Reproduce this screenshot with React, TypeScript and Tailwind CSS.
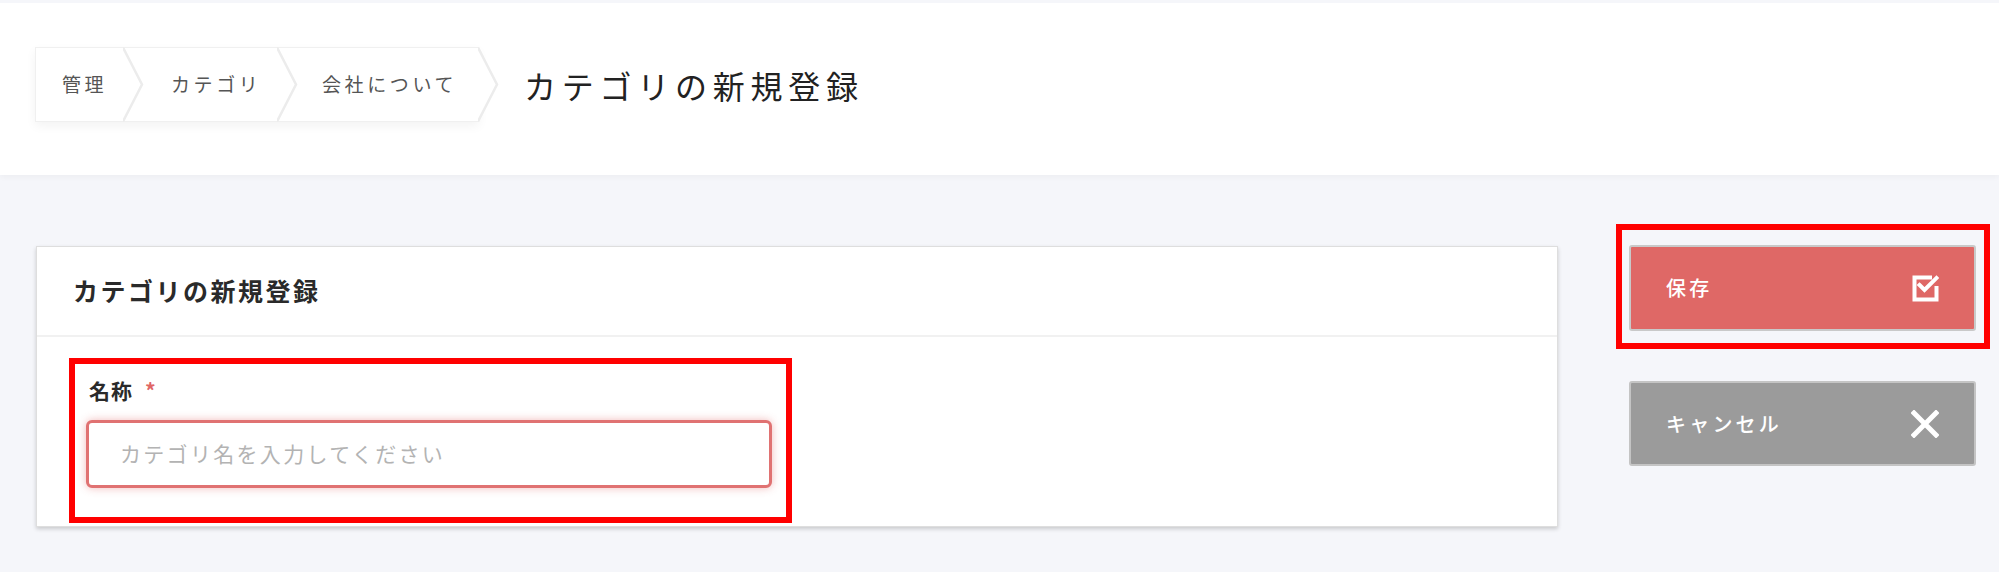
import React from "react";

function Chevron({ last }: { last?: boolean }) {
  return (
    <svg
      className="absolute top-[-1px] left-full z-10"
      width="21"
      height="75"
      viewBox="0 0 21 75"
    >
      {last && <polygon points="0,0 19,37.5 0,75" fill="#ffffff" />}
      <polyline
        points="0,0.5 19,37.5 0,74.5"
        fill="none"
        stroke="#ececec"
        strokeWidth="2.5"
      />
    </svg>
  );
}

function CheckIcon() {
  return (
    <svg width="27" height="27" viewBox="0 0 27 27">
      <path
        d="M18 2.5 H2.5 V24.5 H24.5 V13"
        fill="none"
        stroke="#ffffff"
        strokeWidth="4"
        strokeLinecap="square"
      />
      <path
        d="M7.5 10 L12.5 15 L24.5 3"
        fill="none"
        stroke="#ffffff"
        strokeWidth="4"
        strokeLinecap="square"
      />
    </svg>
  );
}

function XIcon() {
  return (
    <svg width="28" height="28" viewBox="0 0 28 28">
      <path
        d="M3 3 L25 25 M25 3 L3 25"
        fill="none"
        stroke="#ffffff"
        strokeWidth="5"
        strokeLinecap="square"
      />
    </svg>
  );
}

export default function App() {
  return (
    <div className="min-h-[572px] w-[1999px] bg-[#f5f6fa] font-['Noto_Sans_CJK_JP','Noto_Sans',sans-serif] text-[#333]">
      {/* Header */}
      <header className="h-[175px] bg-white border-t-[3px] border-[#f5f6fa] shadow-[0_2px_6px_rgba(0,0,0,0.04)] pt-[44px] pl-[35px]">
        <div className="flex items-center h-[75px]">
          <nav className="flex h-[75px] bg-white border border-[#f0f0f0] shadow-[0_4px_10px_rgba(0,0,0,0.05)]">
            <div className="relative w-[87px] pl-[26px] flex items-center text-[19px] tracking-[0.19em] text-[#555] whitespace-nowrap">
              管理
              <Chevron />
            </div>
            <div className="relative w-[154px] pl-[48px] flex items-center text-[19px] tracking-[0.19em] text-[#555] whitespace-nowrap">
              カテゴリ
              <Chevron />
            </div>
            <div className="relative w-[201px] pl-[45px] flex items-center text-[19px] tracking-[0.19em] text-[#555] whitespace-nowrap">
              会社について
              <Chevron last />
            </div>
          </nav>
          <h1 className="ml-[45px] text-[32px] font-normal tracking-[0.18em] text-[#222] whitespace-nowrap">
            カテゴリの新規登録
          </h1>
        </div>
      </header>

      {/* Main */}
      <main className="flex items-start pl-[36px]">
        <section className="mt-[71px] w-[1522px] bg-white border border-[#dedede] shadow-[0_2px_4px_rgba(0,0,0,0.18)]">
          <div className="h-[90px] border-b-2 border-[#f1f1f1] flex items-center pl-[36px]">
            <h2 className="text-[25px] font-bold tracking-[0.1em] text-[#2a2a2a] whitespace-nowrap">
              カテゴリの新規登録
            </h2>
          </div>
          <div className="pt-[21px] pb-[3px] pl-[32px]">
            <div className="w-[723px] border-[6px] border-[#ff0000] pt-[12px] pb-[29px] pl-[11px]">
              <label className="block pl-[3px] h-[28px] leading-[28px] text-[21px] font-bold tracking-[0.05em] text-[#2a2a2a]">
                名称
                <span className="ml-[12px] text-[#e06666]">*</span>
              </label>
              <div className="mt-[16px] w-[686px] h-[68px] rounded-[6px] border-[3px] border-[#e07272] bg-white shadow-[0_0_8px_rgba(224,102,102,0.45)] flex items-center pl-[31px] text-[21px] tracking-[0.11em] text-[#b3b3b3] whitespace-nowrap">
                カテゴリ名を入力してください
              </div>
            </div>
          </div>
        </section>

        <aside className="ml-[58px] mt-[49px] flex flex-col">
          <div className="w-[374px] border-[6px] border-[#ff0000] pt-[15px] pb-[12px] px-[7px]">
            <button className="w-[347px] h-[86px] rounded-[3px] border-2 border-[#c9c9c9] bg-[#df6866] flex items-center justify-between pl-[35px] pr-[35px] text-white text-[20px] font-medium tracking-[0.16em]">
              <span>保存</span>
              <CheckIcon />
            </button>
          </div>
          <button className="ml-[13px] mt-[32px] w-[347px] h-[85px] rounded-[3px] border-2 border-[#c4c4c4] bg-[#9b9b9b] flex items-center justify-between pl-[35px] pr-[35px] text-white text-[20px] font-medium tracking-[0.16em]">
            <span>キャンセル</span>
            <XIcon />
          </button>
        </aside>
      </main>
    </div>
  );
}
